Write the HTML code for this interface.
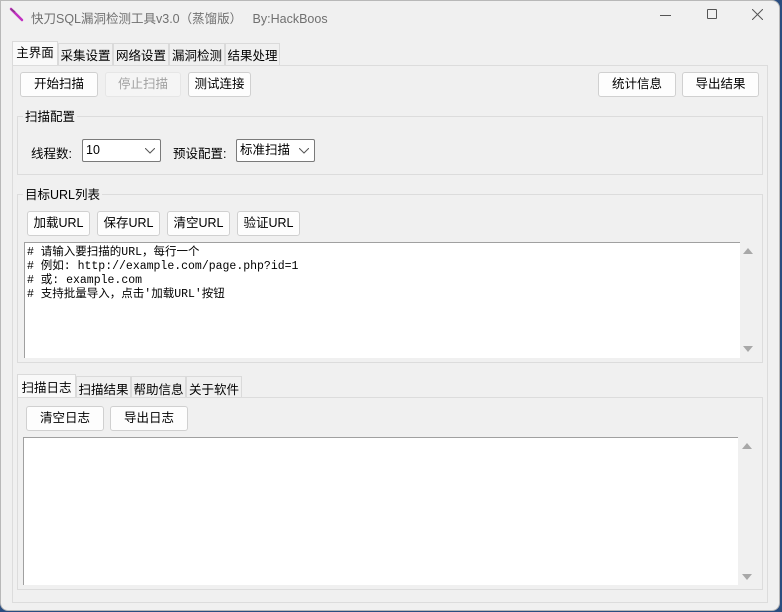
<!DOCTYPE html>
<html><head><meta charset="utf-8"><style>
*{box-sizing:border-box;margin:0;padding:0}
body{width:782px;height:612px;background:#2a4d80;position:relative;overflow:hidden;font-family:"Liberation Sans","Microsoft YaHei","Noto Sans CJK SC",sans-serif;font-size:12px;color:#000}
.a{position:absolute}
.win{left:0;top:0;width:780px;height:611px;background:#f0f0f0;border:1px solid #b8b8b8;border-radius:0 8px 8px 8px}
.btn{position:absolute;background:#fdfdfd;border:1px solid #d0d0d0;border-radius:3px;text-align:center;line-height:23px;font-size:12.5px}
.dis{background:#f5f5f5;border-color:#e6e6e6;color:#a0a0a0}
.tab{position:absolute;height:22px;line-height:22px;text-align:center;font-size:12.5px;border:1px solid #dadada;border-bottom:none;background:#f0f0f0;overflow:hidden}
.tab.sel{background:#f9f9f9;height:24px;top:-2px}
.grp{position:absolute;border:1px solid #dcdcdc}
.lbl{position:absolute;background:#f0f0f0;padding:0 2px;font-size:12.5px}
.combo{position:absolute;background:#fff;border:1px solid #7a7a7a;border-radius:2px;height:23px;line-height:21px;padding-left:3px;font-size:12.5px}
.combo svg{position:absolute;right:5px;top:8px}
.ta{position:absolute;background:#fff;border-top:1px solid #a0a0a0;border-left:1px solid #a0a0a0}
.mono{font-family:"Liberation Mono","Noto Sans CJK SC",monospace;font-size:11.5px;line-height:14px;color:#000;padding:3px 2px}
.up,.dn{position:absolute;width:0;height:0;border-left:5px solid transparent;border-right:5px solid transparent}
.up{border-bottom:6px solid #a8a8a8}.dn{border-top:6px solid #a8a8a8}
</style></head><body>
<div class="a win"></div>
<svg class="a" style="left:9px;top:7px" width="16" height="16"><path d="M2 2 L13 13" stroke="#c030c0" stroke-width="2.5" stroke-linecap="round"/><path d="M2 2 L6 5" stroke="#8a3a8a" stroke-width="1.5"/></svg>
<div class="a" style="left:31px;top:8px;color:#707070;font-size:12.5px">快刀SQL漏洞检测工具v3.0（蒸馏版）&nbsp;&nbsp;&nbsp;By:HackBoos</div>
<div class="a" style="left:660px;top:15px;width:11px;height:1px;background:#555"></div>
<div class="a" style="left:707px;top:9px;width:10px;height:10px;border:1px solid #555;border-radius:1px"></div>
<svg class="a" style="left:752px;top:9px" width="11" height="11"><path d="M0 0L11 11M11 0L0 11" stroke="#555" stroke-width="1"/></svg>

<div class="a" style="left:12px;top:65px;width:756px;height:538px;border:1px solid #dcdcdc;background:#f0f0f0"></div>
<div class="a" style="left:12px;top:43px;width:300px;height:22px">
<div class="tab" style="left:46px;width:55px;line-height:24px">采集设置</div>
<div class="tab" style="left:101px;width:56px;line-height:24px">网络设置</div>
<div class="tab" style="left:157px;width:56px;line-height:24px">漏洞检测</div>
<div class="tab" style="left:213px;width:55px;line-height:24px">结果处理</div>
<div class="tab sel" style="left:0;width:46px">主界面</div>
</div>

<div class="btn" style="left:20px;top:72px;width:78px;height:25px">开始扫描</div>
<div class="btn dis" style="left:105px;top:72px;width:76px;height:25px">停止扫描</div>
<div class="btn" style="left:188px;top:72px;width:63px;height:25px">测试连接</div>
<div class="btn" style="left:598px;top:72px;width:78px;height:25px">统计信息</div>
<div class="btn" style="left:682px;top:72px;width:77px;height:25px">导出结果</div>

<div class="grp" style="left:17px;top:116px;width:746px;height:59px"></div>
<div class="lbl" style="left:23px;top:106px">扫描配置</div>
<div class="a" style="left:31px;top:143px;font-size:12.5px">线程数:</div>
<div class="combo" style="left:82px;top:139px;width:79px">10<svg width="10" height="6"><path d="M0 0L5 5L10 0" stroke="#555" fill="none"/></svg></div>
<div class="a" style="left:173px;top:143px;font-size:12.5px">预设配置:</div>
<div class="combo" style="left:236px;top:139px;width:79px">标准扫描<svg width="10" height="6"><path d="M0 0L5 5L10 0" stroke="#555" fill="none"/></svg></div>

<div class="grp" style="left:17px;top:194px;width:746px;height:169px"></div>
<div class="lbl" style="left:23px;top:184px">目标URL列表</div>
<div class="btn" style="left:27px;top:211px;width:63px;height:25px">加载URL</div>
<div class="btn" style="left:97px;top:211px;width:63px;height:25px">保存URL</div>
<div class="btn" style="left:167px;top:211px;width:63px;height:25px">清空URL</div>
<div class="btn" style="left:237px;top:211px;width:63px;height:25px">验证URL</div>
<div class="ta mono" style="left:24px;top:242px;width:716px;height:116px">
# 请输入要扫描的URL，每行一个<br># 例如: http://example.com/page.php?id=1<br># 或: example.com<br># 支持批量导入，点击'加载URL'按钮</div>
<div class="up" style="left:743px;top:248px"></div>
<div class="dn" style="left:743px;top:346px"></div>

<div class="a" style="left:17px;top:397px;width:746px;height:193px;border:1px solid #dcdcdc"></div>
<div class="a" style="left:17px;top:376px;width:230px;height:21px">
<div class="tab" style="left:59px;width:55px;height:21px;line-height:26px">扫描结果</div>
<div class="tab" style="left:114px;width:55px;height:21px;line-height:26px">帮助信息</div>
<div class="tab" style="left:169px;width:56px;height:21px;line-height:26px">关于软件</div>
<div class="tab sel" style="left:0;width:59px;height:23px;line-height:26px">扫描日志</div>
</div>
<div class="btn" style="left:26px;top:406px;width:78px;height:25px">清空日志</div>
<div class="btn" style="left:110px;top:406px;width:78px;height:25px">导出日志</div>
<div class="ta" style="left:23px;top:437px;width:715px;height:148px"></div>
<div class="up" style="left:742px;top:443px"></div>
<div class="dn" style="left:742px;top:574px"></div>
</body></html>
